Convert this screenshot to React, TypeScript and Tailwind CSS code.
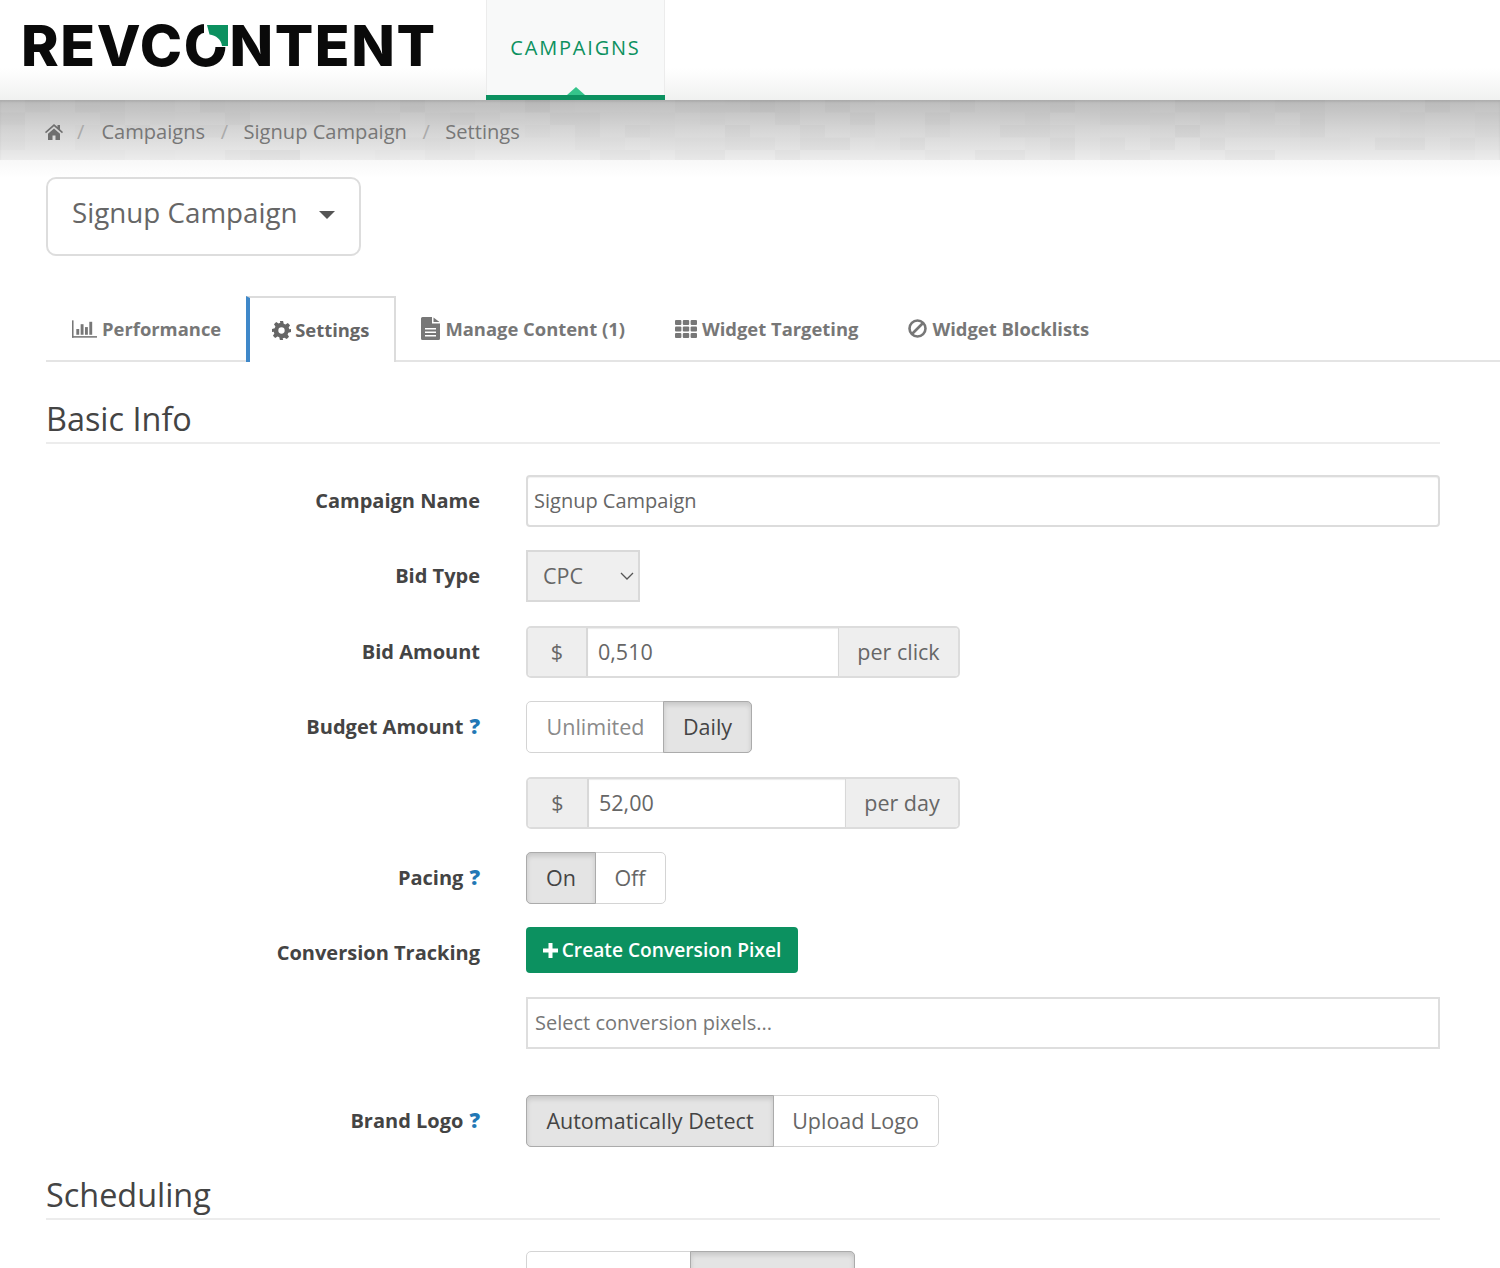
import React from "react";

function Band() {
  const cells: React.ReactElement[] = [];
  let s = 7;
  const rnd = () => {
    s = (s * 9301 + 49297) % 233280;
    return s / 233280;
  };
  for (let y = 0; y < 60; y += 12.5) {
    for (let x = 0; x < 1500; x += 25) {
      const r = rnd();
      const w = r > 0.7 ? 50 : 25;
      cells.push(
        <rect key={x + "-" + y} x={x} y={y} width={w} height={12.5} fill={rnd() > 0.5 ? "#ffffff" : "#000000"} opacity={rnd() * 0.022} />
      );
    }
  }
  return (
    <svg className="absolute inset-0 h-full w-full" viewBox="0 0 1500 60" preserveAspectRatio="none" aria-hidden="true">
      {cells}
    </svg>
  );
}

function Help() {
  return <span className="ml-[6px] text-[21px] leading-none font-extrabold text-[#2277b5]">?</span>;
}

function Row({ label, help, className, children }: { label?: string; help?: boolean; className?: string; children: React.ReactNode }) {
  return (
    <div className={"flex items-start " + (className ?? "")}>
      <div className="w-[434px] shrink-0 pt-[12px] text-right text-[20px] leading-[28px] font-bold text-[#444]">
        {label}
        {help && <Help />}
      </div>
      <div className="ml-[46px] flex-1">{children}</div>
    </div>
  );
}

function Toggle({ items }: { items: { t: string; w: number; on?: boolean; dim?: boolean }[] }) {
  return (
    <div className="inline-flex h-[52px] rounded-[5px] border border-[#d4d4d4]">
      {items.map((it, i) => (
        <div
          key={it.t}
          style={{ width: it.w }}
          className={
            "flex items-center justify-center text-[21.5px] " +
            (it.on
              ? "bg-[#e4e4e4] text-[#444] shadow-[inset_0_3px_5px_rgba(0,0,0,0.13)] border border-[#ababab] -m-px h-[52px] " + (i === 0 ? "rounded-l-[5px]" : "rounded-r-[5px]")
              : it.dim
              ? "text-[#8a8a8a]"
              : "text-[#666]")
          }
        >
          {it.t}
        </div>
      ))}
    </div>
  );
}

function Addon({ value, suffix, addW, sufW, total }: { value: string; suffix: string; addW: number; sufW: number; total: number }) {
  return (
    <div style={{ width: total }} className="flex h-[52px] overflow-hidden rounded-[5px] border-2 border-[#dcdcdc] text-[21.5px] text-[#666]">
      <div style={{ width: addW }} className="flex items-center justify-center border-r-2 border-[#d8d8d8] bg-[#eeeeee]">$</div>
      <div className="flex flex-1 items-center bg-white pl-[10px] shadow-[inset_0_1px_1px_rgba(0,0,0,0.08)]">{value}</div>
      <div style={{ width: sufW }} className="flex items-center justify-center border-l border-[#d8d8d8] bg-[#eeeeee]">{suffix}</div>
    </div>
  );
}

function Tab({ icon, label }: { icon: React.ReactNode; label: string }) {
  return (
    <div className="flex h-[65px] items-center gap-[5px] px-[25px] text-[18.4px] font-bold text-[#777]">
      {icon}
      <span>{label}</span>
    </div>
  );
}

const BarsIcon = (
  <svg className="ml-px" width="25" height="18" viewBox="0 0 26 18" fill="#777"><rect x="0" y="0" width="1.6" height="18" /><rect x="0" y="16.4" width="26" height="1.6" /><rect x="4.5" y="9" width="3" height="6" /><rect x="9" y="4" width="3" height="11" /><rect x="13.5" y="7" width="3" height="8" /><rect x="18" y="1.5" width="3" height="13.5" /></svg>
);
const GearIcon = (
  <svg width="19" height="19" viewBox="0 0 24 24" fill="#666"><path fillRule="evenodd" d="M10 0h4l.8 3.4 2.2.9 3-1.8 2.8 2.8-1.8 3 .9 2.2L24 10v4l-3.4.8-.9 2.2 1.8 3-2.8 2.8-3-1.8-2.2.9L14 24h-4l-.8-3.4-2.2-.9-3 1.8-2.8-2.8 1.8-3-.9-2.2L0 14v-4l3.4-.8.9-2.2-1.8-3 2.8-2.8 3 1.8 2.2-.9L10 0zm2 8a4 4 0 100 8 4 4 0 000-8z" /></svg>
);
const DocIcon = (
  <svg width="19" height="23" viewBox="0 0 19 23" fill="#777"><path fillRule="evenodd" d="M0 1.5A1.5 1.5 0 011.5 0H11v6.5h8v15a1.5 1.5 0 01-1.5 1.5h-16A1.5 1.5 0 010 21.500zM4 11v1.500h11V11zm0 3.500V16h11v-1.500zM4 18v1.500h11V18z" /><path d="M12.500 0.500L18.500 5h-6z" /></svg>
);
const GridIcon = (
  <svg width="22" height="18" viewBox="0 0 22 18" fill="#777">
    {[0, 6.500, 13].map((y) => [0, 7.800, 15.600].map((x) => <rect key={x + "-" + y} x={x} y={y} width="6.400" height="5" rx="1" />))}
  </svg>
);
const BanIcon = (
  <svg width="19" height="19" viewBox="0 0 19 19" fill="none" stroke="#777" strokeWidth="2.600"><circle cx="9.500" cy="9.500" r="8" /><path d="M4 15L15 4" /></svg>
);

export default function App() {
  return (
    <div className="min-h-[1268px] overflow-hidden bg-white font-['Open_Sans',sans-serif]">
      {/* Header */}
      <header className="flex h-[100px] bg-[linear-gradient(to_bottom,#ffffff_0%,#ffffff_68%,#f0f1f0_100%)]">
        <div className="relative w-[486px] shrink-0 pl-[21px] pt-[8px]">
          <div className="relative inline-block font-['Inter',sans-serif] text-[57px] leading-[76px] font-extrabold tracking-[1.6px] text-[#0a0a0a]">
            REVC
            <span className="relative">
              O
              <svg className="absolute left-[20px] top-[11px]" width="28" height="28" viewBox="0 0 28 28" aria-hidden="true">
                <rect x="0" y="0" width="27" height="25" fill="#ffffff" />
                <path d="M3 3H24V24H18C17.500 18 12 13 5.500 12.500z" fill="#0c9160" />
              </svg>
            </span>
            NTENT
          </div>
        </div>
        <div className="relative flex h-[100px] w-[179px] shrink-0 justify-center border-x border-[#ececec] bg-[#f8f9f9] pt-[35px] text-[20px] leading-[26px] font-medium tracking-[1.8px] text-[#0c9160]">
          CAMPAIGNS
          <div className="absolute -inset-x-px bottom-0 h-[5px] bg-[#0c9160]" />
          <div className="absolute bottom-[5px] left-1/2 h-0 w-0 -translate-x-1/2 border-x-[9px] border-b-[8px] border-x-transparent border-b-[#35c48b]" />
        </div>
      </header>

      {/* Breadcrumb */}
      <div className="relative h-[60px] bg-[linear-gradient(to_bottom,#bcbcbc_0%,#d6d6d6_50%,#ececec_100%)] shadow-[inset_0_2px_2px_rgba(0,0,0,0.08)]">
        <Band />
        <div className="relative flex h-full items-center pl-[45px] pt-[4px] text-[20.1px] text-[#777]">
          <svg width="18" height="16" viewBox="0 0 18 16" fill="#6f6f6f"><path d="M9 0L0 8l1 1.200L9 2.200l8 7L18 8l-3-2.700V1h-2.500v2.100zM3 9.800V16h4.500v-4.500h3V16H15V9.800L9 4.500z" /></svg>
          <span className="ml-[14px] mr-[17px] text-[#aaaaaa]">/</span>
          <span>Campaigns</span>
          <span className="mx-[15.5px] text-[#aaaaaa]">/</span>
          <span>Signup Campaign</span>
          <span className="mx-[15.5px] text-[#aaaaaa]">/</span>
          <span>Settings</span>
        </div>
      </div>

      {/* Main */}
      <main className="bg-[linear-gradient(to_bottom,#f8f8f8_0px,#ffffff_18px)] pl-[46px] pt-[17px]">
        <div className="flex h-[79px] w-[315px] items-center rounded-[10px] border-2 border-[#dddddd] pb-[8px] pl-[24px] text-[27.750px] text-[#666]">
          Signup Campaign
          <span className="ml-[21px] mt-[4px] h-0 w-0 border-x-[8px] border-t-[8px] border-x-transparent border-t-[#555]" />
        </div>

        <nav className="mt-[40px] flex h-[66px] items-stretch border-b-2 border-[#e4e4e4]">
          <Tab icon={BarsIcon} label="Performance" />
          <div className="-mb-[2px] flex h-[66px] items-center gap-[4px] border-r-2 border-l-[4px] border-t-2 border-r-[#dcdcdc] border-l-[#3f88c9] border-t-[#dcdcdc] bg-white pl-[22px] pr-[25px] text-[18.4px] font-bold text-[#666]">
            {GearIcon}
            <span>Settings</span>
          </div>
          <Tab icon={DocIcon} label="Manage Content (1)" />
          <Tab icon={GridIcon} label="Widget Targeting" />
          <Tab icon={BanIcon} label="Widget Blocklists" />
        </nav>

        <div className="w-[1394px]">
          <h2 className="mt-[35px] border-b-2 border-[#ececec] pb-[3px] text-[32.4px] leading-[42px] text-[#444]">Basic Info</h2>

          <Row className="mt-[31px]" label="Campaign Name">
            <div className="flex h-[52px] items-center rounded-[4px] border-2 border-[#dcdcdc] pl-[6px] text-[20px] text-[#666] shadow-[inset_0_1px_1px_rgba(0,0,0,0.06)]">Signup Campaign</div>
          </Row>
          <Row className="mt-[23px]" label="Bid Type">
            <div className="flex h-[52px] w-[114px] items-center justify-between border-2 border-[#d9d9d9] bg-[#efefef] pl-[15px] pr-[3px] text-[21.5px] text-[#666]">
              CPC
              <svg width="16" height="10" viewBox="0 0 16 10" fill="none" stroke="#555" strokeWidth="1.300"><path d="M2 2l6 6 6-6" /></svg>
            </div>
          </Row>
          <Row className="mt-[24px]" label="Bid Amount">
            <Addon value="0,510" suffix="per click" addW={60} sufW={120} total={434} />
          </Row>
          <Row className="mt-[23px]" label="Budget Amount" help>
            <Toggle items={[{ t: "Unlimited", w: 137, dim: true }, { t: "Daily", w: 89, on: true }]} />
          </Row>
          <Row className="mt-[24px]">
            <Addon value="52,00" suffix="per day" addW={61} sufW={113} total={434} />
          </Row>
          <Row className="mt-[23px]" label="Pacing" help>
            <Toggle items={[{ t: "On", w: 70, on: true }, { t: "Off", w: 70 }]} />
          </Row>
          <Row className="mt-[23px]" label="Conversion Tracking">
            <div className="flex h-[46px] w-[272px] items-center justify-center gap-[4px] rounded-[4px] bg-[#0c9160] text-[19.2px] font-semibold text-white">
              <svg width="15" height="15" viewBox="0 0 15 15" fill="#fff"><path d="M5.500 0h4v5.500H15v4H9.500V15h-4V9.500H0v-4h5.500z" /></svg>
              Create Conversion Pixel
            </div>
          </Row>
          <Row className="mt-[24px]">
            <div className="flex h-[52px] items-center border-2 border-[#dedede] pl-[7px] text-[20px] text-[#777]">Select conversion pixels...</div>
          </Row>
          <Row className="mt-[46px]" label="Brand Logo" help>
            <Toggle items={[{ t: "Automatically Detect", w: 248, on: true }, { t: "Upload Logo", w: 165 }]} />
          </Row>

          <h2 className="mt-[26px] border-b-2 border-[#ececec] pb-[3px] text-[32.4px] leading-[42px] text-[#444]">Scheduling</h2>
          <Row className="mt-[31px]">
            <Toggle items={[{ t: " ", w: 164 }, { t: "  ", w: 165, on: true }]} />
          </Row>
        </div>
      </main>
    </div>
  );
}
